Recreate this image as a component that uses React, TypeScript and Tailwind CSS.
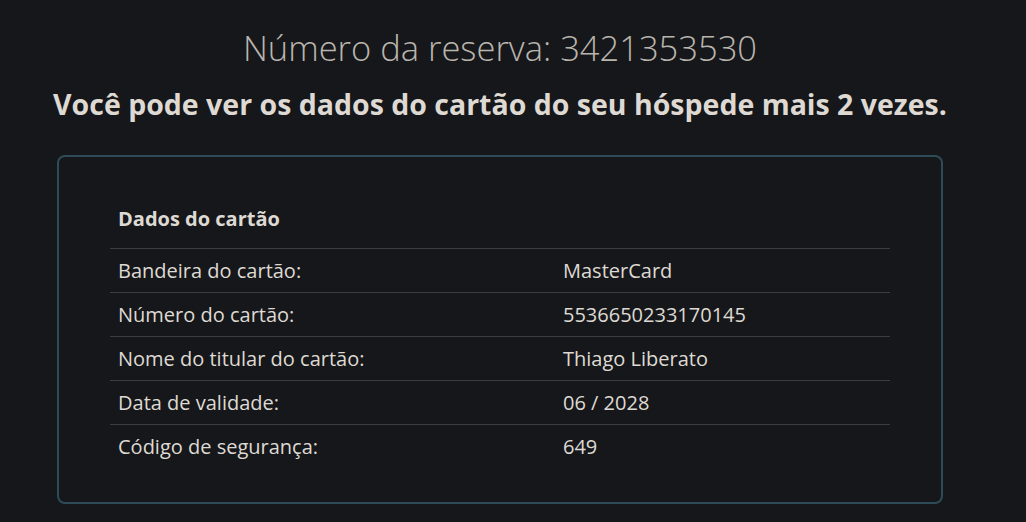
export default function App() {
  const rows: [string, string][] = [
    ['Bandeira do cartão:', 'MasterCard'],
    ['Número do cartão:', '5536650233170145'],
    ['Nome do titular do cartão:', 'Thiago Liberato'],
    ['Data de validade:', '06 / 2028'],
    ['Código de segurança:', '649'],
  ];

  return (
    <div className="min-h-screen bg-[#16171a] text-[#dedad3] font-['Open_Sans',sans-serif]">
      <div className="w-[1000px]">
        <div className="pt-[27px] text-center">
          <h1 className="text-[34.5px] font-light leading-[42px] text-[#b9b5ae]">Número da reserva: 3421353530</h1>
          <h2 className="mt-[17px] text-[28.5px] font-bold leading-[36px] text-[#dedad3]">
            Você pode ver os dados do cartão do seu hóspede mais 2 vezes.
          </h2>
        </div>

        <div className="mx-[57px] mt-[33px] rounded-[8px] border-2 border-[#2c4b56] px-[51px] pt-[42px] pb-[34px]">
          <table className="w-full table-fixed border-collapse text-[20px] leading-[23px]">
            <thead>
              <tr className="border-b border-[#3d3d3f]">
                <th className="w-[445px] px-2 pt-2 pb-[18px] text-left font-bold">Dados do cartão</th>
                <th></th>
              </tr>
            </thead>
            <tbody>
              {rows.map(([label, value], i) => (
                <tr key={label} className={i < rows.length - 1 ? 'border-b border-[#3d3d3f]' : ''}>
                  <td className="px-2 py-[10px]">{label}</td>
                  <td className="px-2 py-[10px]">{value}</td>
                </tr>
              ))}
            </tbody>
          </table>
        </div>
      </div>
    </div>
  );
}
